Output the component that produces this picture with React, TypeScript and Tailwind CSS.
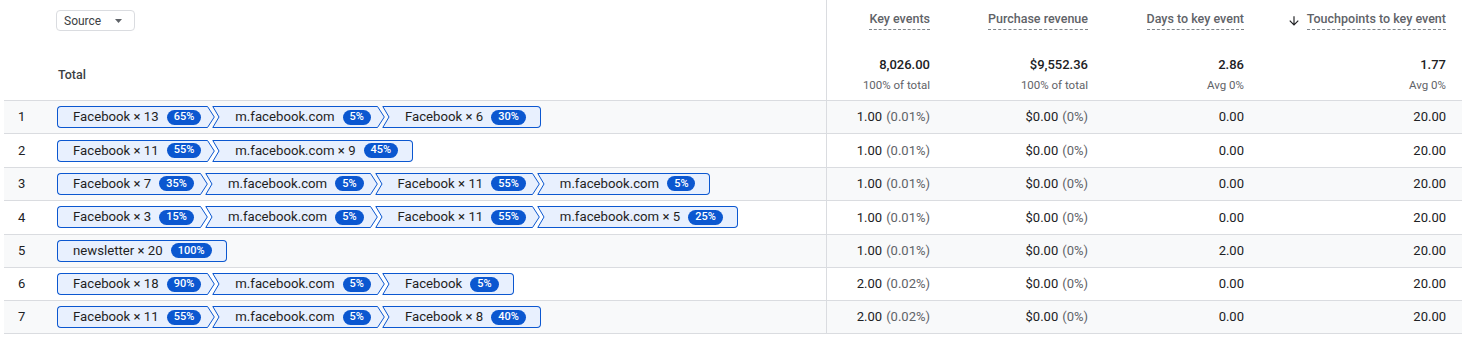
import React from "react";

type Step = [string, string];

type Row = {
  path: Step[];
  events: string;
  eventsPct: string;
  revenue: string;
  revenuePct: string;
  days: string;
  touch: string;
};

const ROWS: Row[] = [
  {
    path: [["Facebook × 13", "65%"], ["m.facebook.com", "5%"], ["Facebook × 6", "30%"]],
    events: "1.00", eventsPct: "(0.01%)", revenue: "$0.00", revenuePct: "(0%)", days: "0.00", touch: "20.00",
  },
  {
    path: [["Facebook × 11", "55%"], ["m.facebook.com × 9", "45%"]],
    events: "1.00", eventsPct: "(0.01%)", revenue: "$0.00", revenuePct: "(0%)", days: "0.00", touch: "20.00",
  },
  {
    path: [["Facebook × 7", "35%"], ["m.facebook.com", "5%"], ["Facebook × 11", "55%"], ["m.facebook.com", "5%"]],
    events: "1.00", eventsPct: "(0.01%)", revenue: "$0.00", revenuePct: "(0%)", days: "0.00", touch: "20.00",
  },
  {
    path: [["Facebook × 3", "15%"], ["m.facebook.com", "5%"], ["Facebook × 11", "55%"], ["m.facebook.com × 5", "25%"]],
    events: "1.00", eventsPct: "(0.01%)", revenue: "$0.00", revenuePct: "(0%)", days: "0.00", touch: "20.00",
  },
  {
    path: [["newsletter × 20", "100%"]],
    events: "1.00", eventsPct: "(0.01%)", revenue: "$0.00", revenuePct: "(0%)", days: "2.00", touch: "20.00",
  },
  {
    path: [["Facebook × 18", "90%"], ["m.facebook.com", "5%"], ["Facebook", "5%"]],
    events: "2.00", eventsPct: "(0.02%)", revenue: "$0.00", revenuePct: "(0%)", days: "0.00", touch: "20.00",
  },
  {
    path: [["Facebook × 11", "55%"], ["m.facebook.com", "5%"], ["Facebook × 8", "40%"]],
    events: "2.00", eventsPct: "(0.02%)", revenue: "$0.00", revenuePct: "(0%)", days: "0.00", touch: "20.00",
  },
];

const COLS = "grid grid-cols-[822px_120px_158px_156px_202px]";

const Notch = () => (
  <svg width="8" height="22" viewBox="0 0 8 22" className="shrink-0">
    <polygon points="0,0 8,0 8,22 0,22 7,11" fill="#e8f0fe" />
    <polyline points="8,0.5 0.8,0.5 7,11 0.8,21.5 8,21.5" fill="none" stroke="#0b57d0" strokeWidth="1" />
  </svg>
);

const Point = () => (
  <svg width="8" height="22" viewBox="0 0 8 22" className="shrink-0">
    <polygon points="0,0 0.5,0 7.5,11 0.5,22 0,22" fill="#e8f0fe" />
    <polyline points="0,0.5 0.5,0.5 7.3,11 0.5,21.5 0,21.5" fill="none" stroke="#0b57d0" strokeWidth="1" />
  </svg>
);

const Chip = ({ step, first, last }: { step: Step; first: boolean; last: boolean }) => (
  <div className={`flex h-[22px] items-stretch ${first ? "" : "-ml-[3px]"}`}>
    {first ? (
      <div className="w-[6px] rounded-l-[4px] border-y border-l border-[#0b57d0] bg-[#e8f0fe]" />
    ) : (
      <Notch />
    )}
    <div
      className={`flex items-center gap-2 border-y border-[#0b57d0] bg-[#e8f0fe] ${
        first ? "pl-[10px]" : "pl-[15px]"
      } ${last ? "pr-[9px]" : "pr-[6px]"}`}
    >
      <span className="whitespace-nowrap text-[13.2px] text-[#1f1f1f]">{step[0]}</span>
      <span className="flex h-[15px] items-center rounded-full bg-[#0b57d0] px-[7px] text-[11px] font-medium text-white">
        {step[1]}
      </span>
    </div>
    {last ? (
      <div className="w-[6px] rounded-r-[4px] border-y border-r border-[#0b57d0] bg-[#e8f0fe]" />
    ) : (
      <Point />
    )}
  </div>
);

const HeadCol = ({
  label,
  total,
  sub,
  sorted,
  divider,
}: {
  label: string;
  total: string;
  sub: string;
  sorted?: boolean;
  divider?: boolean;
}) => (
  <div className={`flex flex-col items-end pr-4 pt-[11px] ${divider ? "border-l border-[#dadce0]" : ""}`}>
    <div className="flex items-center gap-[6px]">
      {sorted && (
        <svg width="14" height="14" viewBox="0 0 24 24" fill="#202124">
          <path d="M20 12l-1.41-1.41L13 16.17V4h-2v12.17l-5.58-5.59L4 12l8 8 8-8z" />
        </svg>
      )}
      <span className="border-b border-dashed border-[#80868b] pb-[2px] text-[12.5px] font-medium leading-[16px] text-[#5f6368]">
        {label}
      </span>
    </div>
    <div className="mt-[25px] text-[13px] font-medium leading-[20px] text-[#202124]">{total}</div>
    <div className="mt-[3px] text-[11.5px] leading-[14px] text-[#5f6368]">{sub}</div>
  </div>
);

export default function App() {
  return (
    <div className="h-[338px] w-full overflow-hidden bg-white pl-[4px] pr-[5px] font-[Roboto,sans-serif]">
      {/* header */}
      <div className={`${COLS} h-[100px]`}>
        <div className="flex flex-col items-start pl-[52px] pt-[10px]">
          <button className="flex h-[21px] items-center gap-[14px] rounded-[4px] border border-[#dadce0] pl-[7px] pr-[12px] text-[12px] text-[#3c4043]">
            Source
            <svg width="7" height="4" viewBox="0 0 7 4">
              <path d="M0 0h7L3.5 4z" fill="#5f6368" />
            </svg>
          </button>
          <div className="ml-[2px] mt-[36px] text-[12.5px] font-medium leading-[16px] text-[#3c4043]">Total</div>
        </div>
        <HeadCol label="Key events" total="8,026.00" sub="100% of total" divider />
        <HeadCol label="Purchase revenue" total="$9,552.36" sub="100% of total" />
        <HeadCol label="Days to key event" total="2.86" sub="Avg 0%" />
        <HeadCol label="Touchpoints to key event" total="1.77" sub="Avg 0%" sorted />
      </div>

      {/* rows */}
      {ROWS.map((row, i) => (
        <div
          key={i}
          className={`${COLS} h-[33.4px] border-t border-[#dadce0] text-[13px] ${
            i % 2 === 0 ? "bg-[#f8f9fa]" : "bg-white"
          } ${i === ROWS.length - 1 ? "border-b" : ""}`}
        >
          <div className="flex items-center">
            <div className="w-[53px] pl-[14px] text-[#202124]">{i + 1}</div>
            <div className="flex items-center">
              {row.path.map((s, j) => (
                <Chip key={j} step={s} first={j === 0} last={j === row.path.length - 1} />
              ))}
            </div>
          </div>
          <div className="flex items-center justify-end border-l border-[#dadce0] pr-4 text-[#202124]">
            {row.events}
            <span className="ml-[4px] text-[#5f6368]">{row.eventsPct}</span>
          </div>
          <div className="flex items-center justify-end pr-4 text-[#202124]">
            {row.revenue}
            <span className="ml-[4px] text-[#5f6368]">{row.revenuePct}</span>
          </div>
          <div className="flex items-center justify-end pr-4 text-[#202124]">{row.days}</div>
          <div className="flex items-center justify-end pr-4 text-[#202124]">{row.touch}</div>
        </div>
      ))}
    </div>
  );
}
